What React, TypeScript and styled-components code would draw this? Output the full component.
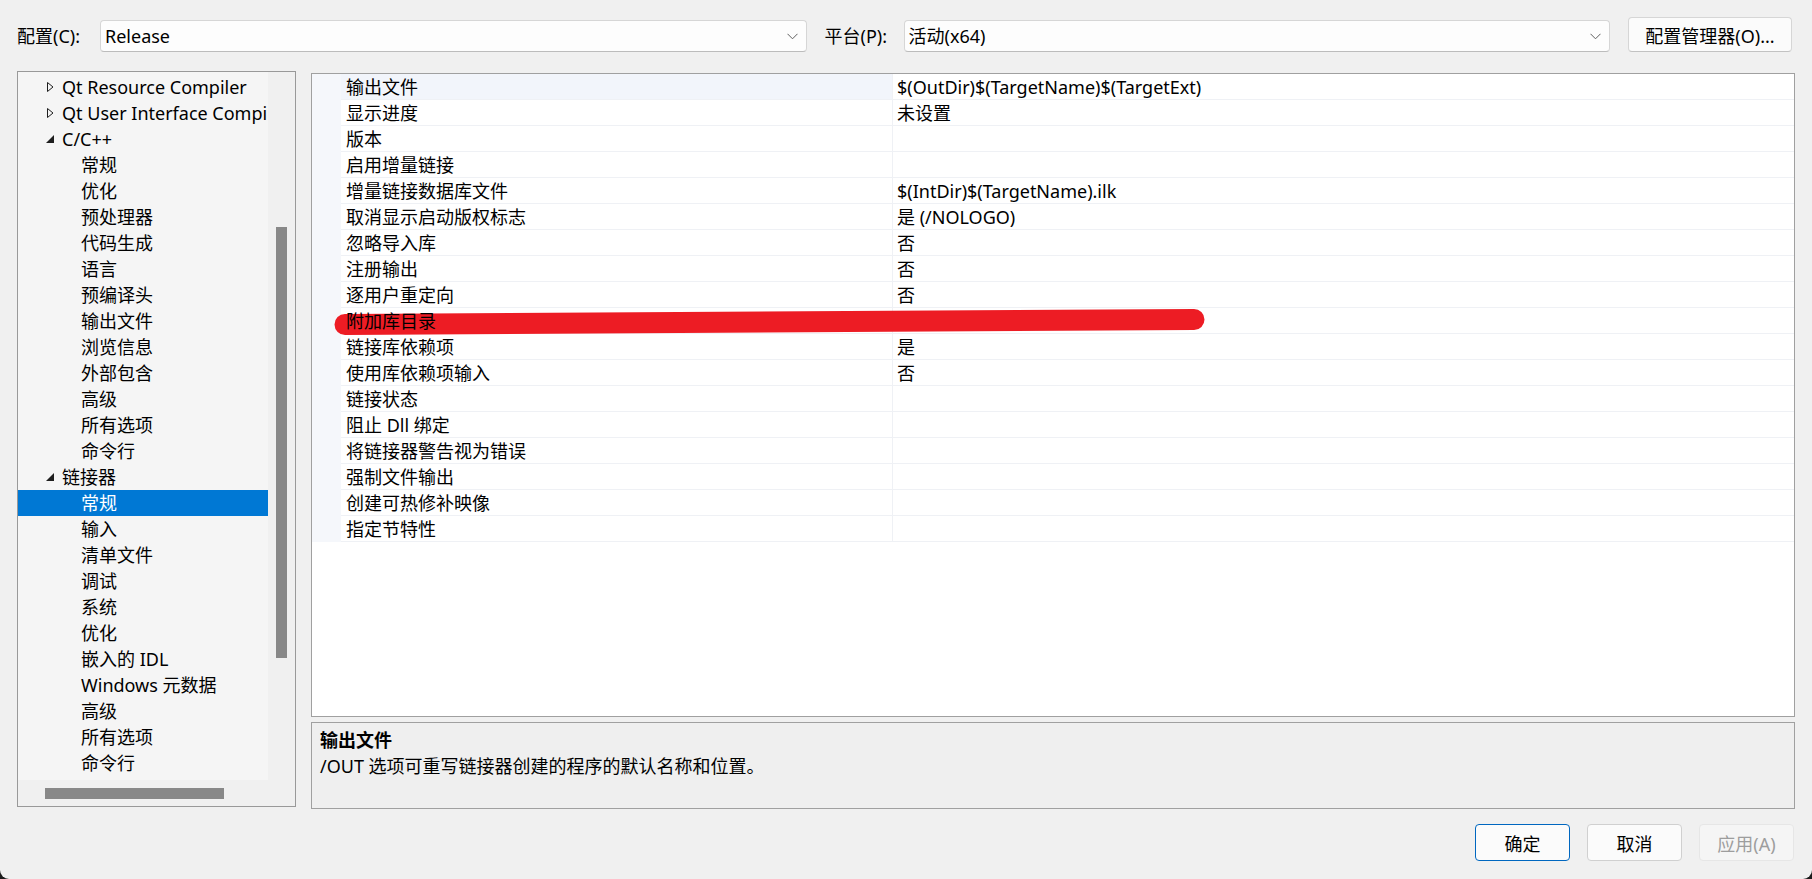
import styled, { createGlobalStyle } from "styled-components";

const GlobalStyle = createGlobalStyle`
  html, body {
    margin: 0;
    padding: 0;
    background: #1c1c1c;
  }
  body {
    font-family: "Noto Sans", "Noto Sans CJK SC", sans-serif;
  }
`;

const Window = styled.div`
  width: 1812px;
  height: 879px;
  box-sizing: border-box;
  padding: 17px 17px 0 17px;
  background: #f0f0f0;
  border-radius: 0 0 9px 9px;
  display: flex;
  flex-direction: column;
  font-size: 18px;
  color: #000;
  overflow: hidden;
`;

const TopBar = styled.div`
  display: flex;
  align-items: flex-end;
  height: 35px;
`;

const Label = styled.div<{ $w: number }>`
  width: ${(p) => p.$w}px;
  flex: none;
  line-height: 32px;
  white-space: nowrap;
`;

const Combo = styled.div`
  flex: 1;
  height: 32px;
  box-sizing: border-box;
  display: flex;
  align-items: center;
  justify-content: space-between;
  padding: 0 8px 0 4px;
  background: #fdfdfd;
  border: 1px solid #d6d6d6;
  border-bottom-color: #bcbcbc;
  border-radius: 4px;
  line-height: 30px;
  margin-right: 18px;
`;

const ToolButton = styled.button`
  width: 164px;
  height: 35px;
  margin-right: 3px;
  padding: 0;
  font: inherit;
  color: #000;
  background: #fbfbfb;
  border: 1px solid #d6d6d6;
  border-bottom-color: #c2c2c2;
  border-radius: 4px;
`;

const Body = styled.div`
  display: flex;
  align-items: flex-start;
  gap: 15px;
  margin-top: 19px;
  height: 738px;
`;

const TreePanel = styled.div`
  width: 279px;
  height: 736px;
  box-sizing: border-box;
  border: 1px solid #999;
  background: #f0f0f0;
  display: grid;
  grid-template-columns: 250px 27px;
  grid-template-rows: 708px 26px;
`;

const TreeList = styled.div`
  background: #f5f5f5;
  padding-top: 2px;
  overflow: hidden;
`;

const TreeRow = styled.div<{ $level: number; $selected?: boolean }>`
  height: 26px;
  display: flex;
  align-items: center;
  padding-left: ${(p) => (p.$level === 0 ? 27 : 63)}px;
  white-space: nowrap;
  overflow: hidden;
  line-height: 26px;
  background: ${(p) => (p.$selected ? "#0078d4" : "transparent")};
  color: ${(p) => (p.$selected ? "#fff" : "#000")};
`;

const Arrow = styled.span`
  width: 17px;
  flex: none;
  display: flex;
  align-items: center;
`;

const VTrack = styled.div`
  display: flex;
  flex-direction: column;
  padding-left: 8px;
`;

const VThumb = styled.div`
  width: 11px;
  height: 431px;
  margin-top: 155px;
  background: #888;
`;

const HTrack = styled.div`
  padding: 8px 0 0 27px;
`;

const HThumb = styled.div`
  width: 179px;
  height: 11px;
  background: #888;
`;

const RightColumn = styled.div`
  flex: 1;
  display: flex;
  flex-direction: column;
  gap: 5px;
  margin-top: 2px;
`;

const Grid = styled.div`
  height: 644px;
  box-sizing: border-box;
  border: 1px solid #a0a0a0;
  background: #fff;
  display: flex;
  flex-direction: column;
`;

const GridRow = styled.div`
  position: relative;
  display: grid;
  grid-template-columns: 29px 552px 1fr;
  height: 26px;
`;

const MarginCell = styled.div`
  background: #f5f7fb;
`;

const Cell = styled.div<{ $selected?: boolean; $name?: boolean }>`
  box-sizing: border-box;
  border-bottom: 1px solid #eff1f5;
  border-right: ${(p) => (p.$name ? "1px solid #eff1f5" : "none")};
  background: ${(p) => (p.$selected ? "#f2f5fb" : "transparent")};
  padding-left: ${(p) => (p.$name ? 5 : 4)}px;
  line-height: 26px;
  white-space: nowrap;
  overflow: hidden;
`;

const CellText = styled.span`
  position: relative;
  z-index: 2;
`;

const Marker = styled.svg`
  position: absolute;
  left: 0;
  top: 0;
  z-index: 1;
  overflow: visible;
  pointer-events: none;
`;

const Description = styled.div`
  height: 87px;
  box-sizing: border-box;
  border: 1px solid #a0a0a0;
  background: #efefef;
  padding: 4px 8px;
  line-height: 26px;
`;

const DescTitle = styled.div`
  font-weight: 700;
`;

const Footer = styled.div`
  display: flex;
  justify-content: flex-end;
  gap: 17px;
  margin-top: 15px;
  padding-right: 1px;
`;

const DialogButton = styled.button<{ $variant?: "default" | "disabled" }>`
  width: 95px;
  height: 37px;
  padding: 0;
  font: inherit;
  border-radius: 4px;
  background: ${(p) => (p.$variant === "disabled" ? "#f5f5f5" : "#fbfbfb")};
  color: ${(p) => (p.$variant === "disabled" ? "#9d9d9d" : "#000")};
  border: 1px solid
    ${(p) =>
      p.$variant === "default"
        ? "#0067c0"
        : p.$variant === "disabled"
        ? "#e6e6e6"
        : "#d0d0d0"};
`;

type TreeItem = {
  label: string;
  level: number;
  arrow?: "collapsed" | "expanded";
  selected?: boolean;
};

const treeItems: TreeItem[] = [
  { label: "Qt Resource Compiler", level: 0, arrow: "collapsed" },
  { label: "Qt User Interface Compiler", level: 0, arrow: "collapsed" },
  { label: "C/C++", level: 0, arrow: "expanded" },
  { label: "常规", level: 1 },
  { label: "优化", level: 1 },
  { label: "预处理器", level: 1 },
  { label: "代码生成", level: 1 },
  { label: "语言", level: 1 },
  { label: "预编译头", level: 1 },
  { label: "输出文件", level: 1 },
  { label: "浏览信息", level: 1 },
  { label: "外部包含", level: 1 },
  { label: "高级", level: 1 },
  { label: "所有选项", level: 1 },
  { label: "命令行", level: 1 },
  { label: "链接器", level: 0, arrow: "expanded" },
  { label: "常规", level: 1, selected: true },
  { label: "输入", level: 1 },
  { label: "清单文件", level: 1 },
  { label: "调试", level: 1 },
  { label: "系统", level: 1 },
  { label: "优化", level: 1 },
  { label: "嵌入的 IDL", level: 1 },
  { label: "Windows 元数据", level: 1 },
  { label: "高级", level: 1 },
  { label: "所有选项", level: 1 },
  { label: "命令行", level: 1 },
];

const properties: [string, string][] = [
  ["输出文件", "$(OutDir)$(TargetName)$(TargetExt)"],
  ["显示进度", "未设置"],
  ["版本", ""],
  ["启用增量链接", ""],
  ["增量链接数据库文件", "$(IntDir)$(TargetName).ilk"],
  ["取消显示启动版权标志", "是 (/NOLOGO)"],
  ["忽略导入库", "否"],
  ["注册输出", "否"],
  ["逐用户重定向", "否"],
  ["附加库目录", ""],
  ["链接库依赖项", "是"],
  ["使用库依赖项输入", "否"],
  ["链接状态", ""],
  ["阻止 Dll 绑定", ""],
  ["将链接器警告视为错误", ""],
  ["强制文件输出", ""],
  ["创建可热修补映像", ""],
  ["指定节特性", ""],
];

function Chevron() {
  return (
    <svg width="11" height="7" viewBox="0 0 11 7">
      <path d="M0.5 0.8 L5.5 5.8 L10.5 0.8" fill="none" stroke="#5f5f5f" strokeWidth="1" />
    </svg>
  );
}

function TreeArrow({ kind }: { kind: "collapsed" | "expanded" }) {
  if (kind === "collapsed") {
    return (
      <svg width="10" height="12" viewBox="0 0 10 12">
        <path d="M2.5 1.5 L8 6 L2.5 10.5 Z" fill="none" stroke="#1e1e1e" strokeWidth="1" />
      </svg>
    );
  }
  return (
    <svg width="10" height="12" viewBox="0 0 10 12">
      <path d="M9 2 L9 10 L1 10 Z" fill="#1e1e1e" />
    </svg>
  );
}

export default function App() {
  return (
    <>
      <GlobalStyle />
      <Window>
        <TopBar>
          <Label $w={83}>配置(C):</Label>
          <Combo>
            <span>Release</span>
            <Chevron />
          </Combo>
          <Label $w={79}>平台(P):</Label>
          <Combo>
            <span>活动(x64)</span>
            <Chevron />
          </Combo>
          <ToolButton>配置管理器(O)...</ToolButton>
        </TopBar>

        <Body>
          <TreePanel>
            <TreeList>
              {treeItems.map((item, i) => (
                <TreeRow key={i} $level={item.level} $selected={item.selected}>
                  {item.arrow && (
                    <Arrow>
                      <TreeArrow kind={item.arrow} />
                    </Arrow>
                  )}
                  {item.label}
                </TreeRow>
              ))}
            </TreeList>
            <VTrack>
              <VThumb />
            </VTrack>
            <HTrack>
              <HThumb />
            </HTrack>
            <div />
          </TreePanel>

          <RightColumn>
            <Grid>
              {properties.map(([name, value], i) => (
                <GridRow key={i}>
                  {name === "附加库目录" && (
                    <Marker width="900" height="26">
                      <line
                        x1="33"
                        y1="16.5"
                        x2="882"
                        y2="11.5"
                        stroke="#ed1c24"
                        strokeWidth="21"
                        strokeLinecap="round"
                      />
                    </Marker>
                  )}
                  <MarginCell />
                  <Cell $name $selected={i === 0}>
                    <CellText>{name}</CellText>
                  </Cell>
                  <Cell>
                    <CellText>{value}</CellText>
                  </Cell>
                </GridRow>
              ))}
            </Grid>
            <Description>
              <DescTitle>输出文件</DescTitle>
              <div>/OUT 选项可重写链接器创建的程序的默认名称和位置。</div>
            </Description>
          </RightColumn>
        </Body>

        <Footer>
          <DialogButton $variant="default">确定</DialogButton>
          <DialogButton>取消</DialogButton>
          <DialogButton $variant="disabled">应用(A)</DialogButton>
        </Footer>
      </Window>
    </>
  );
}
